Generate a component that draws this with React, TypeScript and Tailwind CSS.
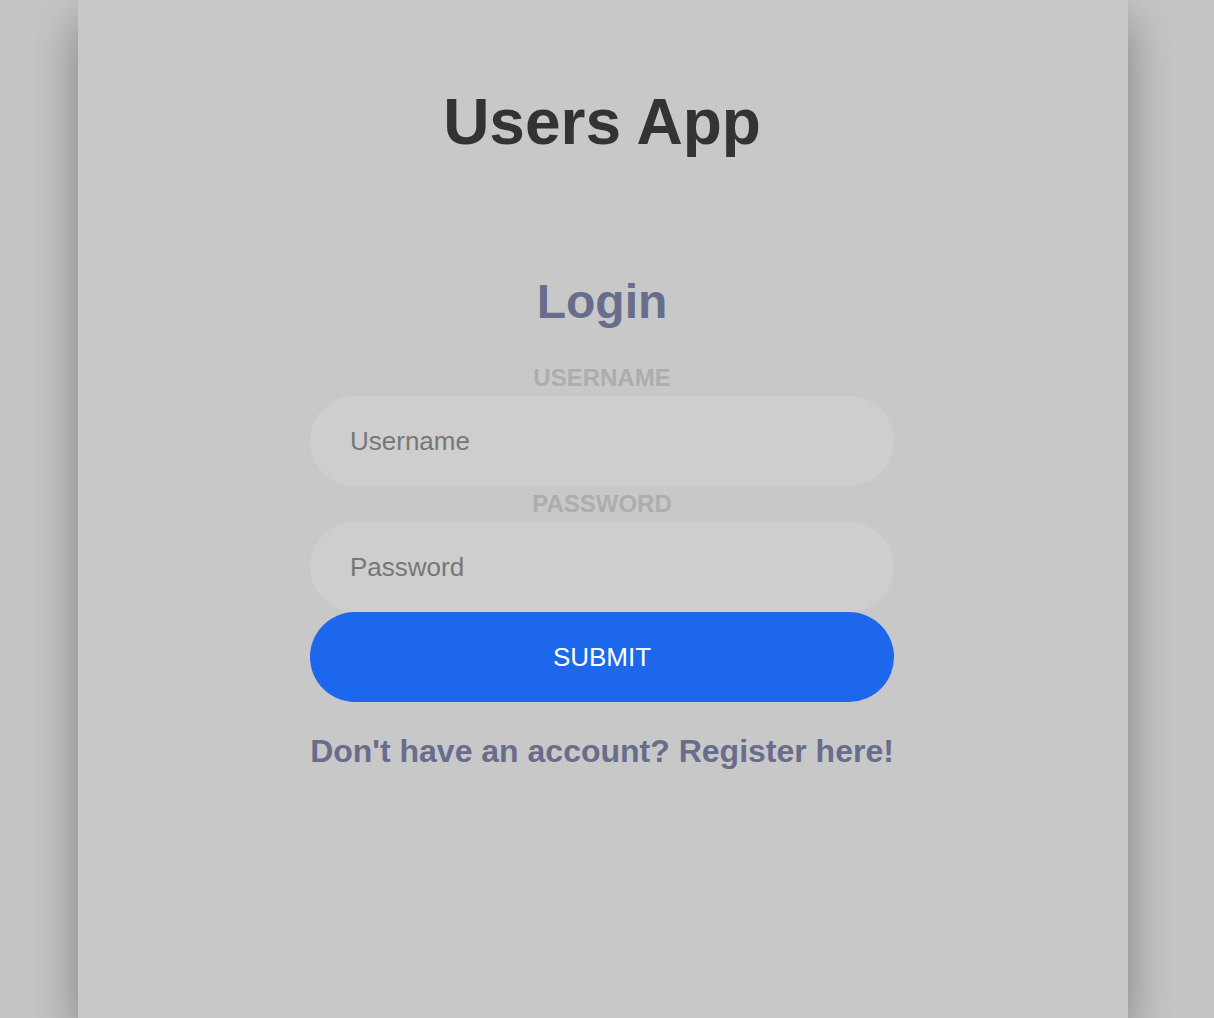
import React from "react";

export default function App() {
  return (
    <div
      className="min-h-screen w-full bg-[#c5c5c5] flex justify-center pr-2"
      style={{ fontFamily: '"Liberation Sans", Arial, Helvetica, sans-serif' }}
    >
      <div className="w-[1050px] min-h-screen bg-[#c8c8c8] shadow-[0_20px_45px_rgba(0,0,0,0.35)] flex flex-col items-center pt-[90px] pr-[2px]">
        <h1 className="text-[64px] leading-[64px] font-bold text-[#333333]">Users App</h1>
        <form
          className="w-[584px] flex flex-col items-center mt-[124px]"
          onSubmit={(e) => e.preventDefault()}
        >
          <h2 className="text-[48px] leading-[48px] font-bold text-[#686d8c]">Login</h2>
          <label
            htmlFor="username"
            className="mt-[34px] h-[36px] text-[24px] leading-[36px] font-bold text-[#adadad]"
          >
            USERNAME
          </label>
          <input
            id="username"
            type="text"
            placeholder="Username"
            className="w-full h-[90px] rounded-full bg-[#cecece] px-[40px] text-[26px] text-[#555] placeholder:text-[#777777] outline-none"
          />
          <label
            htmlFor="password"
            className="h-[36px] text-[24px] leading-[36px] font-bold text-[#adadad]"
          >
            PASSWORD
          </label>
          <input
            id="password"
            type="password"
            placeholder="Password"
            className="w-full h-[90px] rounded-full bg-[#cecece] px-[40px] text-[26px] text-[#555] placeholder:text-[#777777] outline-none"
          />
          <button
            type="submit"
            className="w-full h-[90px] rounded-full bg-[#1c67eb] text-white text-[26px] leading-none"
          >
            SUBMIT
          </button>
          <a
            href="#"
            className="mt-[33px] text-[32px] leading-[32px] font-bold text-[#686d8c] whitespace-nowrap"
          >
            Don't have an account? Register here!
          </a>
        </form>
      </div>
    </div>
  );
}
